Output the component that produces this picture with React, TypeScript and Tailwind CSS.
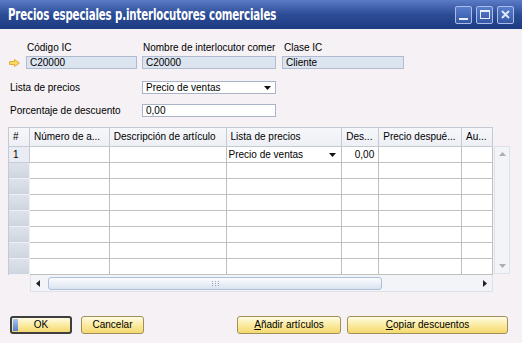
import React from "react";

const COLS = [
  { label: "#", w: "w-[21px]" },
  { label: "Número de a...", w: "w-[80px]" },
  { label: "Descripción de artículo", w: "w-[117px]" },
  { label: "Lista de precios", w: "w-[116px]" },
  { label: "Des...", w: "w-[37px]" },
  { label: "Precio despué...", w: "w-[83px]" },
  { label: "Au...", w: "w-[31px]" },
];

const ROWS = [1, 2, 3, 4, 5, 6, 7, 8];

function YellowArrow() {
  return (
    <svg width="11" height="8" viewBox="0 0 11 8">
      <path d="M0.5 2.5 H5.5 V0.5 L10.5 4 L5.5 7.5 V5.5 H0.5 Z" fill="#f8dc62" stroke="#e2a93a" strokeWidth="1" />
    </svg>
  );
}

function TitleButton({ kind }: { kind: "min" | "max" | "close" }) {
  return (
    <div className="w-[17px] h-[18px] border border-[#a9bde8] rounded-[2px] bg-gradient-to-b from-[#5a7ccc] to-[#3457a6] flex items-center justify-center">
      {kind === "min" && <div className="w-[9px] h-[2px] bg-[#e9eefb] mt-[8px]" />}
      {kind === "max" && <div className="w-[10px] h-[9px] border border-[#e9eefb] border-t-[2px]" />}
      {kind === "close" && (
        <svg width="9" height="9" viewBox="0 0 9 9">
          <path d="M1 1 L8 8 M8 1 L1 8" stroke="#dfe7fa" strokeWidth="2" />
        </svg>
      )}
    </div>
  );
}

function Button({ children, w, def }: { children: React.ReactNode; w: string; def?: boolean }) {
  return (
    <div
      className={`${w} h-[18px] rounded-[3px] flex items-center justify-center relative bg-gradient-to-b from-[#fffbe2] via-[#fbeba0] to-[#f5d86e] ${
        def ? "border-2 border-[#3e3e3e]" : "border border-[#a08f5c]"
      }`}
    >
      {def && <div className="absolute left-[1px] top-[1px] bottom-[1px] w-[5px] bg-gradient-to-b from-[#a9c4f0] to-[#5581d4]" />}
      <span>{children}</span>
    </div>
  );
}

export default function App() {
  return (
    <div className="w-[522px] h-[343px] overflow-hidden bg-[#f5f1f4] text-[10px] leading-[12px] text-black font-['Liberation_Sans',Arial,sans-serif] flex flex-col">
      {/* Title bar */}
      <div className="h-[29px] shrink-0 flex items-center pl-[8px] pr-[8px] bg-gradient-to-b from-[#5b7bc6] via-[#2c4c96] to-[#1d3b81]">
        <span className="inline-block origin-left scale-x-[0.76] whitespace-nowrap text-white font-bold text-[15px] tracking-[-0.2px] font-['Liberation_Sans_Narrow','DejaVu_Sans_Condensed','Liberation_Sans',sans-serif]">
          Precios especiales p.interlocutores comerciales
        </span>
        <div className="ml-auto flex gap-[4px]">
          <TitleButton kind="min" />
          <TitleButton kind="max" />
          <TitleButton kind="close" />
        </div>
      </div>

      {/* Header fields */}
      <div className="mt-[13px] flex items-end">
        <div className="w-[26px] h-[13px] flex items-center pl-[9px]">
          <YellowArrow />
        </div>
        <div className="w-[116px]">
          <div className="pl-[1px] mb-[2px]">Código IC</div>
          <div className="w-[111px] h-[13px] border border-[#aebbd0] bg-[#dce4ef] pl-[3px] leading-[11px]">C20000</div>
        </div>
        <div className="w-[140px]">
          <div className="w-[136px] pl-[1px] mb-[2px] whitespace-nowrap overflow-hidden">Nombre de interlocutor comer</div>
          <div className="w-[134px] h-[13px] border border-[#aebbd0] bg-[#dce4ef] pl-[3px] leading-[11px]">C20000</div>
        </div>
        <div>
          <div className="pl-[2px] mb-[2px]">Clase IC</div>
          <div className="w-[122px] h-[13px] border border-[#aebbd0] bg-[#dce4ef] pl-[3px] leading-[11px]">Cliente</div>
        </div>
      </div>

      <div className="mt-[12px] flex items-center">
        <div className="w-[142px] pl-[10px]">Lista de precios</div>
        <div className="w-[134px] h-[13px] border border-[#a9b4c6] bg-white pl-[3px] leading-[11px] flex items-center">
          <span>Precio de ventas</span>
          <svg className="ml-auto mr-[4px]" width="7" height="4" viewBox="0 0 7 4">
            <path d="M0 0 H7 L3.5 4 Z" fill="#111" />
          </svg>
        </div>
      </div>

      <div className="mt-[10px] flex items-center">
        <div className="w-[142px] pl-[10px]">Porcentaje de descuento</div>
        <div className="w-[134px] h-[13px] border border-[#a9b4c6] bg-white pl-[3px] leading-[11px]">0,00</div>
      </div>

      {/* Grid */}
      <div className="mt-[10px] ml-[8px]">
        <div className="flex">
          <div className="w-[485px] border-l border-t border-[#c4c9d4]">
            <div className="flex h-[19px] bg-gradient-to-b from-[#f6f7fa] to-[#eceff4]">
              {COLS.map((c) => (
                <div key={c.label} className={`${c.w} border-r border-b border-[#c4c9d4] flex items-center pl-[4px] whitespace-nowrap overflow-hidden`}>
                  {c.label}
                </div>
              ))}
            </div>
            {ROWS.map((r) => (
              <div key={r} className="flex h-[16px] bg-white">
                <div
                  className={`w-[21px] border-r border-b flex items-center pl-[4px] ${
                    r === 1 ? "bg-[#e9ecf2] border-[#c8ccd6]" : "bg-gradient-to-b from-[#dde2ea] to-[#cfd5e0] border-[#eef0f4]"
                  }`}
                >
                  {r === 1 ? "1" : ""}
                </div>
                <div className="w-[80px] border-r border-b border-[#c0c0c0]" />
                <div className="w-[117px] border-r border-b border-[#c0c0c0]" />
                <div className="w-[116px] border-r border-b border-[#c0c0c0] flex items-center pl-[2px]">
                  {r === 1 && (
                    <>
                      <span>Precio de ventas</span>
                      <svg className="ml-auto mr-[5px]" width="7" height="4" viewBox="0 0 7 4">
                        <path d="M0 0 H7 L3.5 4 Z" fill="#111" />
                      </svg>
                    </>
                  )}
                </div>
                <div className="w-[37px] border-r border-b border-[#c0c0c0] flex items-center justify-end pr-[4px]">
                  {r === 1 ? "0,00" : ""}
                </div>
                <div className="w-[83px] border-r border-b border-[#c0c0c0]" />
                <div className="w-[31px] border-r border-b border-[#c0c0c0]" />
              </div>
            ))}
          </div>
          {/* vertical scrollbar */}
          <div className="mt-[19px] ml-[1px] w-[16px] h-[128px] bg-[#f3f4f8] border border-[#dde1e9] flex flex-col items-center justify-between py-[5px]">
            <svg width="7" height="4" viewBox="0 0 7 4">
              <path d="M0 4 H7 L3.5 0 Z" fill="#a9aeb8" />
            </svg>
            <svg width="7" height="4" viewBox="0 0 7 4">
              <path d="M0 0 H7 L3.5 4 Z" fill="#a9aeb8" />
            </svg>
          </div>
        </div>
        {/* horizontal scrollbar */}
        <div className="ml-[22px] w-[463px] h-[17px] bg-[#f3f4f8] border border-[#dde1e9] border-t-0 flex items-center px-[5px]">
          <svg width="4" height="7" viewBox="0 0 4 7">
            <path d="M4 0 V7 L0 3.5 Z" fill="#222" />
          </svg>
          <div className="ml-[8px] w-[334px] h-[13px] rounded-[3px] border border-[#aebfd8] bg-gradient-to-b from-[#fbfcfe] to-[#dae3f0] flex items-center justify-center">
            <svg width="7" height="5" viewBox="0 0 7 5">
              <g fill="#9aa6b8">
                <rect x="0" y="0" width="1" height="1" />
                <rect x="3" y="0" width="1" height="1" />
                <rect x="6" y="0" width="1" height="1" />
                <rect x="0" y="2" width="1" height="1" />
                <rect x="3" y="2" width="1" height="1" />
                <rect x="6" y="2" width="1" height="1" />
                <rect x="0" y="4" width="1" height="1" />
                <rect x="3" y="4" width="1" height="1" />
                <rect x="6" y="4" width="1" height="1" />
              </g>
            </svg>
          </div>
          <svg className="ml-auto" width="4" height="7" viewBox="0 0 4 7">
            <path d="M0 0 V7 L4 3.5 Z" fill="#222" />
          </svg>
        </div>
      </div>

      {/* Buttons */}
      <div className="mt-[24px] flex pl-[10px] pr-[14px]">
        <Button w="w-[62px]" def>
          OK
        </Button>
        <div className="ml-[9px]">
          <Button w="w-[63px]">Cancelar</Button>
        </div>
        <div className="ml-auto flex gap-[6px]">
          <Button w="w-[104px]">
            <span className="underline">A</span>ñadir artículos
          </Button>
          <Button w="w-[161px]">
            <span className="underline">C</span>opiar descuentos
          </Button>
        </div>
      </div>
    </div>
  );
}
